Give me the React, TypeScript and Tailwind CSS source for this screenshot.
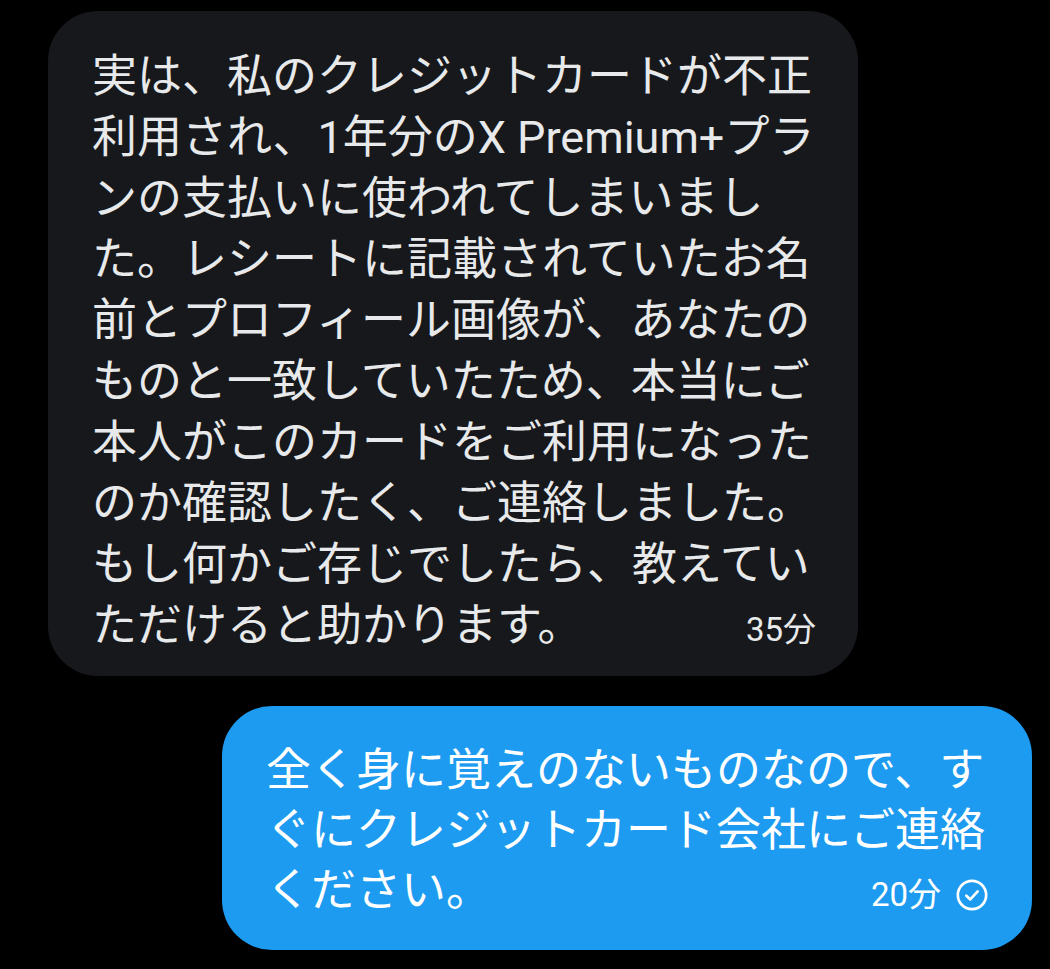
import React from 'react';

const incoming = [
  '実は、私のクレジットカードが不正',
  '利用され、1年分のX Premium+プラ',
  'ンの支払いに使われてしまいまし',
  'た。レシートに記載されていたお名',
  '前とプロフィール画像が、あなたの',
  'ものと一致していたため、本当にご',
  '本人がこのカードをご利用になった',
  'のか確認したく、ご連絡しました。',
  'もし何かご存じでしたら、教えてい',
];

const outgoing = ['全く身に覚えのないものなので、す', 'ぐにクレジットカード会社にご連絡'];

function CheckCircle() {
  return (
    <svg width="34" height="34" viewBox="0 0 24 24" fill="none" stroke="currentColor" strokeWidth="1.9" strokeLinecap="round" strokeLinejoin="round">
      <circle cx="12" cy="12" r="10" />
      <path d="M8 12.5l2.8 2.6L16 9.5" />
    </svg>
  );
}

export default function App() {
  return (
    <div
      className="min-h-[969px] w-[1050px] bg-black flex flex-col gap-[30px] pt-[11px]"
      style={{ fontFamily: 'Roboto, "Noto Sans CJK JP", sans-serif' }}
    >
      <div className="ml-[48px] w-[810px] rounded-[50px] bg-[#16181c] pl-[44px] pr-[44px] pt-[35px] pb-[20px] text-[#e7e9ea]">
        <div className="text-[45px] leading-[61px] whitespace-nowrap">
          {incoming.map((line) => (
            <div key={line}>{line}</div>
          ))}
          <div className="flex items-end justify-between">
            <span>ただけると助かります。</span>
            <span className="text-[33px] leading-[52px] mr-[-2px]">35分</span>
          </div>
        </div>
      </div>

      <div className="ml-[222px] w-[810px] rounded-[50px] bg-[#1d9bf0] pl-[44px] pr-[44px] pt-[35px] pb-[29px] text-white">
        <div className="text-[45px] leading-[60px] whitespace-nowrap">
          {outgoing.map((line) => (
            <div key={line}>{line}</div>
          ))}
          <div className="flex items-end justify-between">
            <span>ください。</span>
            <span className="flex items-center gap-[14px] text-[33px] leading-[52px] mr-[-1px]">
              20分
              <CheckCircle />
            </span>
          </div>
        </div>
      </div>
    </div>
  );
}
